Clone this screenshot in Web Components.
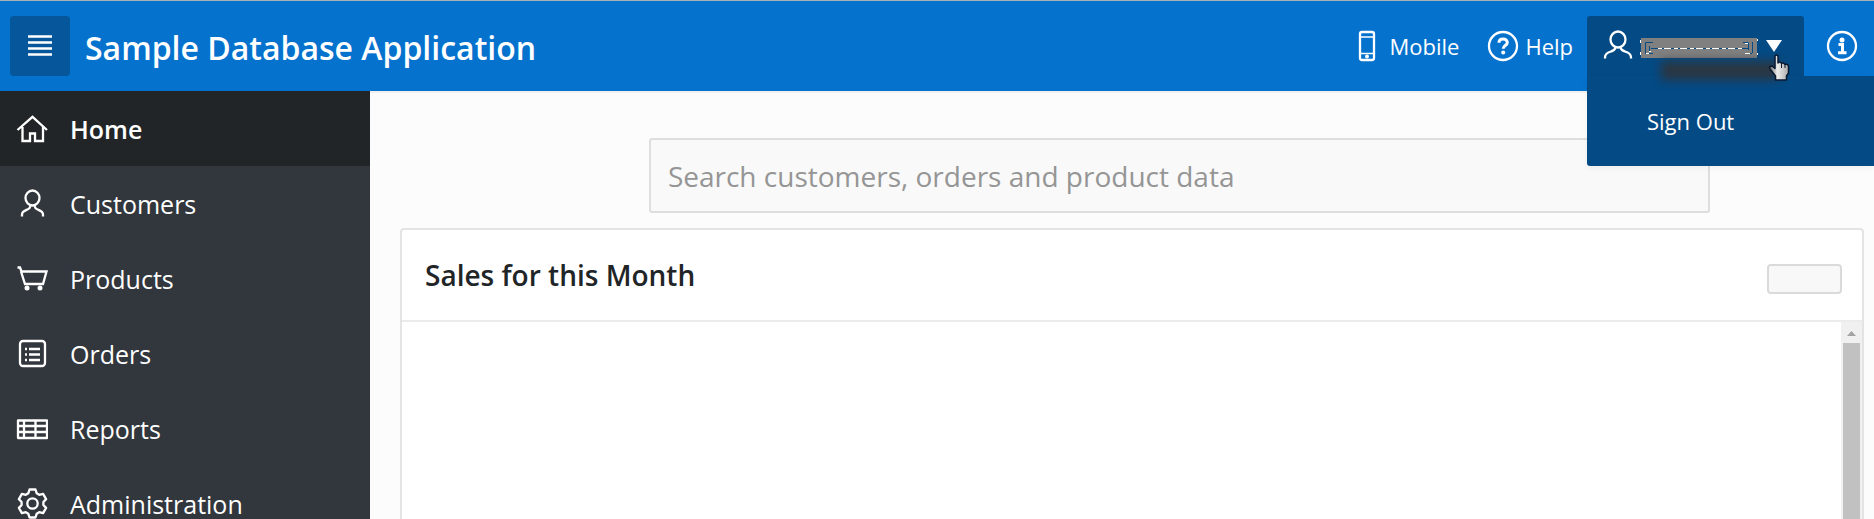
<!DOCTYPE html>
<html lang="en">
<head>
<meta charset="utf-8">
<title>Sample Database Application</title>
<style>
  html, body { margin: 0; height: 100%; }
  body { font-family: "Open Sans", "Noto Sans", sans-serif; background: #fcfcfc; color: #222; overflow: hidden; }
</style>
</head>
<body>
<sample-app></sample-app>
<script>
const ICONS = {
  menu: '<path d="M4 6.5h24M4 12.5h24M4 18.500h24M4 24.500h24"/>',
  home: '<path d="M1.5 17 16.5 3.8 31 17M6.5 14v14h7.500v-7.500h5v7.500h8v-14"/>',
  person: '<ellipse cx="16.5" cy="10" rx="7" ry="7.500"/><path d="M6 28.500v-2c0-3 3-4 5.500-5 1.500-.6 2.500-1.500 3-3.500M27 28.500v-2c0-3-3-4-5.500-5-1.500-.6-2.500-1.500-3-3.500"/>',
  user: '<ellipse cx="16" cy="9.500" rx="7.500" ry="8"/><path d="M3 28.500v-1c0-3 2-4.500 4.500-5.500 3-1 5.500-1.500 6-4.500M29 28.500v-1c0-3-2-4.500-4.500-5.500-3-1-5.500-1.500-6-4.500"/>',
  cart: '<path d="M1.500 4.500h2.500l1.500 4h25l-3.500 12.500h-18l-4-12.500"/><circle class="dot" cx="11" cy="25" r="2.500"/><circle class="dot" cx="24" cy="25" r="2.500"/>',
  orders: '<rect x="4" y="3" width="25" height="25" rx="3"/><path d="M13 11h11M13 16.500h11M13 22h11M9 11h2M9 16.500h2M9 22h2"/>',
  table: '<path d="M2 7.500h29v17.500h-29zM8 7.500v17.500M19.500 7.500v17.500M2 13h29M2 19h29" stroke-linejoin="round"/>',
  gear: '<g transform="translate(16.500 15.500)" stroke-linejoin="round"><path d="M-3-14H3L4.200-10.200 6.700-8.700 10.600-9.600 13.600-4.400 10.900-1.500V1.500L13.600 4.400 10.600 9.600 6.700 8.700 4.200 10.200 3 14H-3L-4.200 10.200-6.700 8.700-10.600 9.600-13.600 4.400-10.900 1.500V-1.500L-13.600-4.400-10.600-9.600-6.700-8.700-4.200-10.200Z"/><circle r="5.200"/></g>',
  mobile: '<rect x="9" y="2" width="14" height="28" rx="2"/><path d="M9 7h14M9 23.500h14" stroke-width="1.500"/><circle class="dot" cx="16" cy="26.600" r="2"/>',
  help: '<circle cx="16" cy="16" r="14"/><path stroke-width="3" d="M12 12.800c0-2.400 1.700-3.800 4.100-3.800s4.200 1.400 4.200 3.500c0 3-4.100 3-4.100 6.300"/><circle class="dot" cx="16.200" cy="22.500" r="2"/>',
  info: '<circle cx="16" cy="16" r="14"/><circle class="dot" cx="16" cy="10" r="2.500"/><path stroke-width="3" d="M12.500 14.500h4v8M12 22.800h8.500"/>'
};

class AppIcon extends HTMLElement {
  constructor() {
    super();
    this.attachShadow({ mode: 'open' });
  }
  connectedCallback() {
    this.shadowRoot.innerHTML = `<style>
      :host { display: block; flex: none; width: 32px; height: 32px; }
      svg { display: block; width: 100%; height: 100%; fill: none; stroke: currentColor; stroke-width: 2.3; }
      .dot { fill: currentColor; stroke: none; }
    </style><svg viewBox="0 0 32 32" aria-hidden="true">${ICONS[this.getAttribute('name')]}</svg>`;
  }
}

function define(name, html, base = HTMLElement) {
  const template = document.createElement('template');
  template.innerHTML = html;
  customElements.define(name, class extends base {
    constructor() {
      super();
      this.attachShadow({ mode: 'open' }).append(template.content.cloneNode(true));
    }
  });
}

customElements.define('app-icon', AppIcon);

define('nav-item', `<style>
  :host { display: block; }
  a { display: flex; align-items: center; gap: 22px; height: 75px; padding: 0 16px; box-sizing: border-box;
      color: #fff; font-size: 25px; line-height: 36px; text-decoration: none; }
  :host([current]) a { background: #222527; font-weight: 600; }
</style><a href="#"><slot name="icon"></slot><slot></slot></a>`);

define('side-nav', `<style>
  :host { display: block; flex: none; width: 370px; overflow: hidden; background: #32363d; }
</style>
<nav aria-label="Main">
  <nav-item current><app-icon slot="icon" name="home"></app-icon>Home</nav-item>
  <nav-item><app-icon slot="icon" name="person"></app-icon>Customers</nav-item>
  <nav-item><app-icon slot="icon" name="cart"></app-icon>Products</nav-item>
  <nav-item><app-icon slot="icon" name="orders"></app-icon>Orders</nav-item>
  <nav-item><app-icon slot="icon" name="table"></app-icon>Reports</nav-item>
  <nav-item><app-icon slot="icon" name="gear"></app-icon>Administration</nav-item>
</nav>`);

define('bar-link', `<style>
  :host { display: block; }
  a { display: flex; align-items: center; gap: 6px; color: #fff; font-size: 22px; line-height: 32px; text-decoration: none; }
</style><a href="#"><slot name="icon"></slot><slot></slot></a>`);

define('user-menu', `<style>
  :host { display: block; position: relative; width: 217px; height: 60px; }
  button { display: flex; align-items: center; width: 100%; height: 60px; padding: 0 20px 0 15px; box-sizing: border-box;
           border: 0; border-radius: 3px 3px 0 0; background: #044a84; color: #fff; }
  .name { flex: none; width: 118px; height: 20px; margin: 4px 8px 0 6px; }
  .caret { flex: none; width: 16px; height: 12px; }
  .glow { position: absolute; left: 74px; top: 45px; width: 118px; height: 19px; background: #2a3743; filter: blur(5px); }
  .menu { position: absolute; top: 60px; left: 0; width: 287px; height: 90px; padding: 29px 60px; box-sizing: border-box;
          border-radius: 0 0 0 3px; background: #044a84; box-shadow: 0 2px 6px #0000000d; }
  .pointer { position: absolute; left: 181px; top: 38px; width: 22px; height: 27px; }
</style>
<button type="button" aria-label="Account" aria-expanded="true">
  <app-icon name="user"></app-icon>
  <svg class="name" viewBox="0 0 118 20" aria-hidden="true">
    <path fill="#808080" d="M1 0h116v20H1z"/>
    <path fill="none" stroke="#044a84" stroke-width="1" d="M13 4.500H5.500v11h7.500M103 4.500h5.500M112.500 4v11M106 15.500h6M9.500 8v5M11 10.500h98M108.500 5v7"/>
    <path fill="none" stroke="#fff" stroke-width="1" stroke-dasharray="4 2 7 3" d="M18 10.500h85"/>
    <path fill="none" stroke="#fff" stroke-width="1" d="M6 15.500h3M9 13.500h2M105 15.500h5M105 5.500h3M.5 2v3M.5 14v3M117.500 1v2M117.500 15v2"/>
  </svg>
  <svg class="caret" viewBox="0 0 16 12" aria-hidden="true"><path fill="#fff" d="M0 0h16L8 12z"/></svg>
</button>
<div class="menu"><bar-link>Sign Out</bar-link></div>
<div class="glow"></div>
<svg class="pointer" viewBox="0 0 22 27" aria-hidden="true">
  <defs><linearGradient id="g"><stop offset=".1" stop-color="#888"/><stop offset=".4" stop-color="#eee"/><stop offset="1" stop-color="#aaa"/></linearGradient></defs>
  <path fill="url(#g)" stroke="#0a1830" stroke-width="1.500" stroke-linejoin="round" d="M7 2Q8.500 0 10 2V9Q12 7 13.500 9.500 15.500 8 17 10.500 20 9.500 20.500 12.500V19L18.500 22V26H7.500V22L2 15Q1 12 4 12L7 14.500Z"/>
  <path stroke="#0a1830" d="M13.500 10v4M17 11v3"/>
</svg>`);

define('app-header', `<style>
  :host { display: block; position: relative; z-index: 1; flex: none; background: #0572ce; border-top: 1px solid #a9b0b6; }
  header { display: flex; align-items: center; height: 90px; padding: 0 16px 0 10px; box-sizing: border-box; }
  .toggle { display: grid; place-items: center; width: 60px; height: 60px; padding: 0; border: 0; border-radius: 4px; background: #05569a; color: #fff; }
  h1 { flex: 1; margin: 3px 0 0 15px; color: #fff; font-size: 32px; line-height: 44px; font-weight: 600; }
  .links { display: flex; align-items: center; }
  .mobile { margin-right: 28px; }
  .help { margin-right: 14px; }
  .info { margin-left: 22px; }
</style>
<header>
  <button class="toggle" type="button" aria-label="Navigation"><app-icon name="menu"></app-icon></button>
  <h1>Sample Database Application</h1>
  <div class="links">
    <bar-link class="mobile"><app-icon slot="icon" name="mobile"></app-icon>Mobile</bar-link>
    <bar-link class="help"><app-icon slot="icon" name="help"></app-icon>Help</bar-link>
    <user-menu></user-menu>
    <bar-link class="info"><app-icon slot="icon" name="info"></app-icon></bar-link>
  </div>
</header>`);

define('search-box', `<style>
  :host { display: block; margin: 0 10.5% 15px 17%; }
  input { display: block; width: 100%; height: 75px; padding: 0 17px; box-sizing: border-box; border: 2px solid #dedede;
          border-radius: 3px; background: #f9f9f9; font: 28px/40px "Open Sans", "Noto Sans", sans-serif; color: #222; }
  input::placeholder { color: #959595; opacity: 1; }
</style><input type="search" aria-label="Search" placeholder="Search customers, orders and product data">`);

define('content-region', `<style>
  :host { display: flex; flex-direction: column; flex: 1; border: 2px solid #e4e4e4; border-bottom: 0; border-radius: 4px 4px 0 0; background: #fff; }
  .head { display: flex; align-items: center; height: 92px; padding: 0 20px 0 23px; box-sizing: border-box; border-bottom: 2px solid #ebebeb; }
  h2 { flex: 1; margin: 0; font-size: 28px; line-height: 40px; font-weight: 600; color: #222527; }
  button { width: 75px; height: 30px; margin-top: 8px; padding: 0; border: 2px solid #dadada; border-radius: 4px; background: #f8f8f8; }
  .body { display: flex; flex: 1; }
  .content { flex: 1; }
  .track { display: flex; flex-direction: column; align-items: center; width: 21px; background: #f0f0f0; }
  .track svg { flex: none; width: 9px; height: 21px; }
  .thumb { flex: 1; width: 17px; background: #c1c1c1; }
</style>
<div class="head"><h2><slot name="title"></slot></h2><button type="button" aria-label="Options"></button></div>
<div class="body"><div class="content"><slot></slot></div>
  <div class="track"><svg viewBox="0 0 9 21" aria-hidden="true"><path fill="#a3a3a3" d="M0 14 4.500 9 9 14z"/></svg><div class="thumb"></div></div></div>`);

define('sample-app', `<style>
  :host { display: flex; flex-direction: column; height: 100vh; }
  .page { display: flex; flex: 1; min-height: 0; }
  main { display: flex; flex-direction: column; flex: 1; min-width: 0; padding: 45px 10px 0 30px; border-top: 2px solid #f0f0f0; }
</style>
<app-header></app-header>
<div class="page">
  <side-nav></side-nav>
  <main>
    <search-box></search-box>
    <content-region><span slot="title">Sales for this Month</span></content-region>
  </main>
</div>`);
</script>
</body>
</html>
